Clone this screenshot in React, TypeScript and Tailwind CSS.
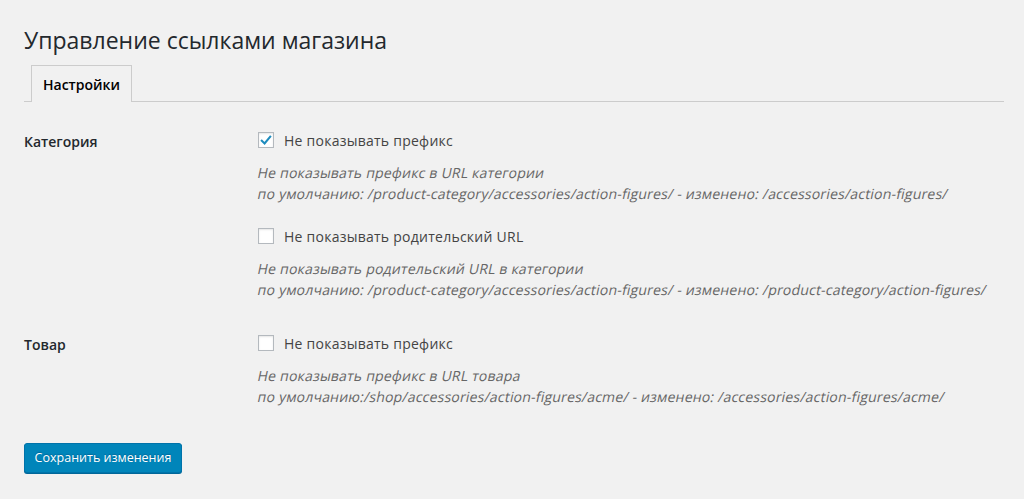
import { useState } from 'react';

type Option = {
  id: string;
  label: string;
  hint: string;
  example: string;
  checked: boolean;
};

function Checkbox({ checked, onChange }: { checked: boolean; onChange: () => void }) {
  return (
    <button
      type="button"
      onClick={onChange}
      className="w-4 h-4 shrink-0 bg-white border border-[#b4b9be] shadow-[inset_0_1px_2px_rgba(0,0,0,0.1)] flex items-center justify-center"
    >
      {checked && (
        <svg viewBox="0 0 16 16" className="w-[15px] h-[15px]">
          <path d="M3.2 8.2 L6.4 11.3 L12.8 3.6" fill="none" stroke="#1e8cbe" strokeWidth="2.4" strokeLinecap="square" />
        </svg>
      )}
    </button>
  );
}

function OptionBlock({ opt, toggle, first }: { opt: Option; toggle: () => void; first?: boolean }) {
  return (
    <div className={first ? '' : 'mt-[22px]'}>
      <label className="flex items-center h-5 gap-[10px] text-[14px] tracking-[0.25px] text-[#444] cursor-pointer">
        <Checkbox checked={opt.checked} onChange={toggle} />
        <span>{opt.label}</span>
      </label>
      <p className="mt-3 text-[14px] leading-[21px] tracking-[0.2px] text-[#666]">
        <span className="inline-block -skew-x-12">{opt.hint}</span>
        <br />
        <span className="inline-block -skew-x-12">{opt.example}</span>
      </p>
    </div>
  );
}

export default function App() {
  const [opts, setOpts] = useState<Option[]>([
    {
      id: 'cat-prefix',
      label: 'Не показывать префикс',
      hint: 'Не показывать префикс в URL категории',
      example: 'по умолчанию: /product-category/accessories/action-figures/ - изменено: /accessories/action-figures/',
      checked: true,
    },
    {
      id: 'cat-parent',
      label: 'Не показывать родительский URL',
      hint: 'Не показывать родительский URL в категории',
      example: 'по умолчанию: /product-category/accessories/action-figures/ - изменено: /product-category/action-figures/',
      checked: false,
    },
    {
      id: 'product-prefix',
      label: 'Не показывать префикс',
      hint: 'Не показывать префикс в URL товара',
      example: 'по умолчанию:/shop/accessories/action-figures/acme/ - изменено: /accessories/action-figures/acme/',
      checked: false,
    },
  ]);

  const toggle = (id: string) =>
    setOpts((prev) => prev.map((o) => (o.id === id ? { ...o, checked: !o.checked } : o)));

  return (
    <div className="min-h-screen bg-[#f1f1f1] text-[#23282d] font-['Open_Sans',sans-serif] pl-6 pr-5">
      <h1 className="pt-[26px] text-[23px] leading-[29px] font-normal">Управление ссылками магазина</h1>

      {/* Tabs */}
      <div className="mt-[10px] flex pl-[7px] border-b border-[#ccc]">
        <div className="-mb-px w-[101px] h-[37px] border border-b-0 border-[#ccc] bg-[#f1f1f1] flex items-center justify-center text-[14px] font-semibold text-black">
          Настройки
        </div>
      </div>

      {/* Категория */}
      <div className="mt-7 flex">
        <div className="w-[234px] shrink-0 pt-[2px] text-[14px] leading-5 font-semibold">Категория</div>
        <div>
          <OptionBlock opt={opts[0]} toggle={() => toggle(opts[0].id)} first />
          <OptionBlock opt={opts[1]} toggle={() => toggle(opts[1].id)} />
        </div>
      </div>

      {/* Товар */}
      <div className="mt-[33px] flex">
        <div className="w-[234px] shrink-0 pt-[2px] text-[14px] leading-5 font-semibold">Товар</div>
        <div>
          <OptionBlock opt={opts[2]} toggle={() => toggle(opts[2].id)} first />
        </div>
      </div>

      <button
        type="button"
        className="mt-9 h-[30px] w-[158px] rounded-[3px] bg-[#0085ba] border border-[#0073aa] shadow-[0_1px_0_#006799] text-white text-[12.5px] [text-shadow:0_-1px_1px_#006799]"
      >
        Сохранить изменения
      </button>
    </div>
  );
}
